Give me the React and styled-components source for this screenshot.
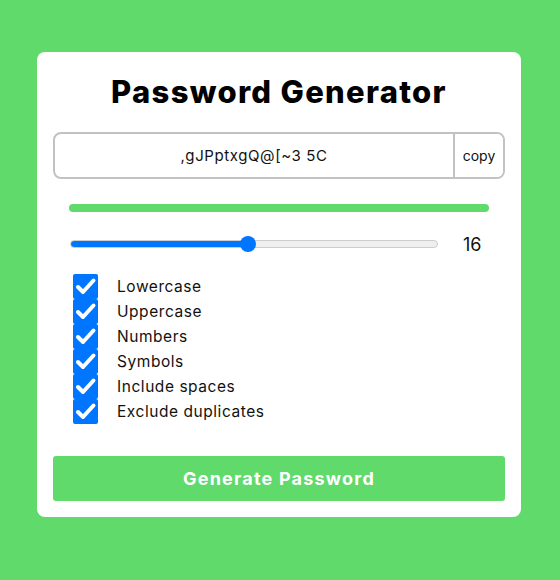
import React, { useState } from "react";
import styled, { createGlobalStyle } from "styled-components";

const Global = createGlobalStyle`
  html, body { margin: 0; padding: 0; background: #5fda6b; }
  body { font-family: "Inter", "Noto Sans", sans-serif; }
  * { box-sizing: border-box; }
`;

const Page = styled.div`
  min-height: 580px;
  padding: 52px 0 0 37px;
`;

const Card = styled.div`
  width: 484px;
  background: #ffffff;
  border-radius: 8px;
  padding: 20px 16px 16px;
  display: flex;
  flex-direction: column;
`;

const Title = styled.h1`
  margin: 0;
  height: 40px;
  line-height: 40px;
  text-align: center;
  font-size: 31px;
  font-weight: 800;
  color: #000;
  letter-spacing: 1.3px;
`;

const InputGroup = styled.div`
  margin-top: 20px;
  height: 47px;
  display: flex;
  border: 2px solid #c2c2c2;
  border-radius: 8px;
  overflow: hidden;
`;

const PasswordField = styled.div`
  flex: 1;
  display: flex;
  align-items: center;
  justify-content: center;
  font-size: 15px;
  letter-spacing: 0.6px;
  color: #111;
`;

const CopyButton = styled.button`
  width: 50px;
  border: none;
  border-left: 2px solid #c2c2c2;
  background: #fff;
  font-family: inherit;
  font-size: 14px;
  color: #111;
  padding: 0;
  cursor: pointer;
`;

const StrengthBar = styled.div`
  margin: 25px 16px 0;
  height: 8px;
  border-radius: 4px;
  background: #5fda6b;
`;

const SliderRow = styled.div`
  margin: 20px 0 0 17px;
  height: 24px;
  display: flex;
  align-items: center;
  gap: 25px;
`;

const Range = styled.input`
  -webkit-appearance: none;
  appearance: none;
  width: 368px;
  height: 16px;
  margin: 0;
  background: transparent;
  &::-webkit-slider-runnable-track {
    height: 8px;
    border-radius: 4px;
    border: 1px solid #cdcdcd;
    background: linear-gradient(
      to right,
      #0075ff 0%,
      #0075ff ${(p) => p.$fill}%,
      #efefef ${(p) => p.$fill}%,
      #efefef 100%
    );
  }
  &::-webkit-slider-thumb {
    -webkit-appearance: none;
    width: 16px;
    height: 16px;
    border-radius: 50%;
    background: #0075ff;
    border: none;
    margin-top: -5px;
  }
`;

const LengthValue = styled.span`
  font-size: 18px;
  color: #111;
`;

const OptionList = styled.div`
  margin: 18px 0 0 20px;
  display: flex;
  flex-direction: column;
`;

const OptionRow = styled.label`
  height: 25px;
  display: flex;
  align-items: center;
  gap: 19px;
  font-size: 15.5px;
  letter-spacing: 0.55px;
  color: #111;
`;

const Box = styled.span`
  width: 25px;
  height: 25px;
  border-radius: 2px;
  background: ${(p) => (p.$checked ? "#0075ff" : "#fff")};
  display: flex;
  align-items: center;
  justify-content: center;
  flex-shrink: 0;
`;

const GenerateButton = styled.button`
  margin-top: 32px;
  height: 45px;
  border: none;
  border-radius: 3px;
  background: #5fda6b;
  color: #fff;
  font-family: inherit;
  font-size: 18px;
  font-weight: 700;
  letter-spacing: 1.2px;
  cursor: pointer;
`;

const options = [
  "Lowercase",
  "Uppercase",
  "Numbers",
  "Symbols",
  "Include spaces",
  "Exclude duplicates",
];

function Check() {
  return (
    <svg width="25" height="25" viewBox="0 0 25 25">
      <path
        d="M5 13 L10 18 L20.5 6.5"
        fill="none"
        stroke="#fff"
        strokeWidth="4"
        strokeLinecap="round"
        strokeLinejoin="round"
      />
    </svg>
  );
}

export default function App() {
  const [length, setLength] = useState(16);
  const min = 1;
  const max = 32;
  const fill = ((length - min) / (max - min)) * 100;
  return (
    <>
      <Global />
      <Page>
        <Card>
          <Title>Password Generator</Title>
          <InputGroup>
            <PasswordField>,gJPptxgQ@[~3 5C</PasswordField>
            <CopyButton>copy</CopyButton>
          </InputGroup>
          <StrengthBar />
          <SliderRow>
            <Range
              type="range"
              min={min}
              max={max}
              value={length}
              $fill={fill}
              onChange={(e) => setLength(Number(e.target.value))}
            />
            <LengthValue>{length}</LengthValue>
          </SliderRow>
          <OptionList>
            {options.map((o) => (
              <OptionRow key={o}>
                <Box $checked>
                  <Check />
                </Box>
                {o}
              </OptionRow>
            ))}
          </OptionList>
          <GenerateButton>Generate Password</GenerateButton>
        </Card>
      </Page>
    </>
  );
}
